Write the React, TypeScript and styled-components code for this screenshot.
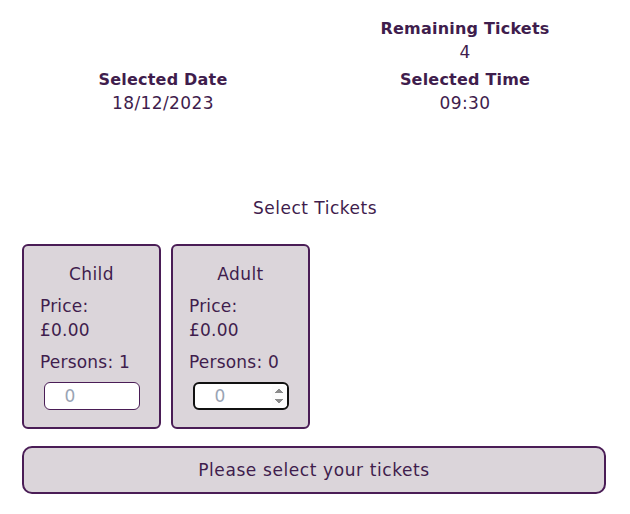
import React from "react";
import styled, { createGlobalStyle } from "styled-components";

const GlobalStyle = createGlobalStyle`
  body {
    margin: 0;
    background: #ffffff;
    font-family: "DejaVu Sans", "Noto Sans", sans-serif;
    color: #3f1d4d;
  }
`;

const Page = styled.div`
  display: flex;
  flex-direction: column;
  padding: 17px 0 0;
`;

const InfoGrid = styled.div`
  display: grid;
  grid-template-columns: 1fr 1fr;
  row-gap: 4px;
  padding: 0 14px 0 12px;
`;

const InfoBlock = styled.div<{ $col: number }>`
  display: flex;
  flex-direction: column;
  align-items: center;
  grid-column: ${(p) => p.$col};
`;

const InfoTitle = styled.div`
  font-size: 16px;
  font-weight: 700;
  line-height: 24px;
  letter-spacing: 0.2px;
`;

const InfoValue = styled.div`
  font-size: 17px;
  line-height: 23px;
  letter-spacing: 0.4px;
`;

const SectionTitle = styled.div`
  margin-top: 81px;
  text-align: center;
  font-size: 17px;
  line-height: 24px;
  letter-spacing: 0.5px;
`;

const Tickets = styled.div`
  display: flex;
  flex-direction: column;
  gap: 17px;
  padding: 24px 24px 0 22px;
`;

const CardRow = styled.div`
  display: flex;
  gap: 10px;
`;

const Card = styled.div`
  width: 139px;
  height: 185px;
  box-sizing: border-box;
  border: 2px solid #4a1d56;
  border-radius: 6px;
  background: #dbd5da;
  padding: 16px 16px 0;
  display: flex;
  flex-direction: column;
`;

const CardTitle = styled.div`
  text-align: center;
  font-size: 17px;
  line-height: 24px;
  letter-spacing: 0.4px;
  margin-bottom: 8px;
`;

const CardLine = styled.div`
  font-size: 17px;
  line-height: 24px;
  letter-spacing: 0.2px;
  white-space: nowrap;
`;

const Persons = styled(CardLine)`
  margin-top: 8px;
`;

const Qty = styled.input<{ $focused?: boolean }>`
  align-self: center;
  margin-top: 8px;
  width: 96px;
  height: 28px;
  box-sizing: border-box;
  border-radius: 6px;
  background: #ffffff;
  font-family: "DejaVu Sans", sans-serif;
  font-size: 17px;
  color: #9aa4b4;
  caret-color: #3f1d4d;
  padding: 0 0 0 20px;
  border: ${(p) => (p.$focused ? "2px solid #111111" : "1px solid #4a1d56")};
  outline: none;
`;

const SubmitButton = styled.button`
  width: 100%;
  height: 48px;
  box-sizing: border-box;
  border: 2px solid #4a1d56;
  border-radius: 10px;
  background: #dbd5da;
  color: #3f1d4d;
  font-family: "DejaVu Sans", sans-serif;
  font-size: 17px;
  letter-spacing: 0.6px;
`;

const ticketTypes = [
  { name: "Child", price: "£0.00", persons: 1, focused: false },
  { name: "Adult", price: "£0.00", persons: 0, focused: true },
];

export default function App() {
  return (
    <Page>
      <GlobalStyle />
      <InfoGrid>
        <InfoBlock $col={2}>
          <InfoTitle>Remaining Tickets</InfoTitle>
          <InfoValue>4</InfoValue>
        </InfoBlock>
        <InfoBlock $col={1}>
          <InfoTitle>Selected Date</InfoTitle>
          <InfoValue>18/12/2023</InfoValue>
        </InfoBlock>
        <InfoBlock $col={2}>
          <InfoTitle>Selected Time</InfoTitle>
          <InfoValue>09:30</InfoValue>
        </InfoBlock>
      </InfoGrid>

      <SectionTitle>Select Tickets</SectionTitle>

      <Tickets>
        <CardRow>
          {ticketTypes.map((t) => (
            <Card key={t.name}>
              <CardTitle>{t.name}</CardTitle>
              <CardLine>Price:</CardLine>
              <CardLine>{t.price}</CardLine>
              <Persons>Persons: {t.persons}</Persons>
              <Qty
                type={t.focused ? "number" : "text"}
                defaultValue="0"
                autoFocus={t.focused}
                $focused={t.focused}
              />
            </Card>
          ))}
        </CardRow>
        <SubmitButton>Please select your tickets</SubmitButton>
      </Tickets>
    </Page>
  );
}
